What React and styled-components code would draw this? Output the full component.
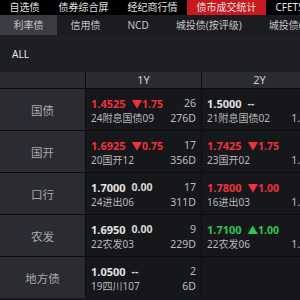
import styled, { createGlobalStyle } from "styled-components";

const GlobalStyle = createGlobalStyle`
  html, body {
    margin: 0;
    padding: 0;
    background: #16171b;
    overflow: hidden;
  }
  body {
    font-family: "Noto Sans", "Noto Sans CJK SC", sans-serif;
  }
`;

const topTabs = ["自选债", "债券综合屏", "经纪商行情", "债市成交统计", "CFETS"];
const subTabs = ["利率债", "信用债", "NCD", "城投债(按评级)", "城投债(按地区)"];

const rows = [
  {
    label: "国债",
    cells: [
      { value: "1.4525", change: "▼1.75", tone: "down", count: "26", name: "24附息国债09", term: "276D" },
      { value: "1.5000", change: "--", tone: "flat", count: "", name: "21附息国债02", term: "1.6Y" },
    ],
  },
  {
    label: "国开",
    cells: [
      { value: "1.6925", change: "▼0.75", tone: "down", count: "17", name: "20国开12", term: "356D" },
      { value: "1.7425", change: "▼1.75", tone: "down", count: "", name: "23国开02", term: "1.4Y" },
    ],
  },
  {
    label: "口行",
    cells: [
      { value: "1.7000", change: "0.00", tone: "flat", count: "17", name: "24进出06", term: "311D" },
      { value: "1.7800", change: "▼1.00", tone: "down", count: "", name: "16进出03", term: "1.5Y" },
    ],
  },
  {
    label: "农发",
    cells: [
      { value: "1.6950", change: "0.00", tone: "flat", count: "9", name: "22农发03", term: "229D" },
      { value: "1.7100", change: "▲1.00", tone: "up", count: "", name: "22农发06", term: "1.0Y" },
    ],
  },
  {
    label: "地方债",
    cells: [
      { value: "1.0500", change: "--", tone: "flat", count: "2", name: "19四川107", term: "6D" },
      null,
    ],
  },
];

const toneColor = { up: "#2fc453", down: "#f0303c", flat: "#e4e4e4" };

export default function App() {
  return (
    <Page>
      <GlobalStyle />
      <TopBar>
        {topTabs.map((t, i) => (
          <TopTab key={t} $active={i === 3}>
            {t}
          </TopTab>
        ))}
      </TopBar>
      <SubBar>
        {subTabs.map((t, i) => (
          <SubTab key={t} $active={i === 0}>
            {t}
          </SubTab>
        ))}
      </SubBar>
      <FilterBar>ALL</FilterBar>
      <Grid>
        <HeaderCell />
        <HeaderCell>1Y</HeaderCell>
        <HeaderCell>2Y</HeaderCell>
        {rows.map((r) => [
          <LabelCell key={r.label}>{r.label}</LabelCell>,
          ...r.cells.map((c, i) =>
            c ? (
              <DataCell key={r.label + i}>
                <Line>
                  <Value $tone={c.tone}>{c.value}</Value>
                  <Change $tone={c.tone}>{c.change}</Change>
                  <Side>{c.count}</Side>
                </Line>
                <Line>
                  <Name>{c.name}</Name>
                  <Side>{c.term}</Side>
                </Line>
              </DataCell>
            ) : (
              <DataCell key={r.label + i} />
            )
          ),
        ])}
      </Grid>
    </Page>
  );
}

const Page = styled.div`
  width: 300px;
  height: 300px;
  overflow: hidden;
  background: #16171b;
`;

const TopBar = styled.div`
  display: flex;
  height: 15px;
  background: #000;
  white-space: nowrap;
`;

const TopTab = styled.div`
  flex: none;
  padding: 0 9.5px;
  font-size: 10px;
  line-height: 15px;
  color: #e2e2e2;
  background: ${(p) => (p.$active ? "#c8191f" : "transparent")};
`;

const SubBar = styled.div`
  display: flex;
  height: 20px;
  background: #1b1c20;
  white-space: nowrap;
`;

const SubTab = styled.div`
  flex: none;
  padding: 0 13.5px;
  font-size: 10px;
  line-height: 20px;
  color: #c4c4c4;
  background: ${(p) => (p.$active ? "#3b3c43" : "transparent")};
`;

const FilterBar = styled.div`
  display: flex;
  align-items: center;
  height: 37px;
  padding-left: 12px;
  font-size: 10px;
  color: #e6e6e6;
  background: #1e1f23;
`;

const Grid = styled.div`
  display: grid;
  grid-template-columns: 85px 115px 115px;
  grid-template-rows: 16px;
  grid-auto-rows: 41px;
  gap: 1px;
  width: max-content;
  background: #0c0d10;
`;

const HeaderCell = styled.div`
  background: #2a2b30;
  color: #cfcfcf;
  font-size: 11px;
  line-height: 16px;
  text-align: center;
`;

const LabelCell = styled.div`
  display: flex;
  align-items: center;
  justify-content: center;
  background: #2b2c31;
  color: #a9a9a9;
  font-size: 11.5px;
`;

const DataCell = styled.div`
  background: #16171b;
  padding: 7px 5px 0;
`;

const Line = styled.div`
  display: flex;
  align-items: center;
  height: 14.5px;
  white-space: nowrap;
`;

const Value = styled.span`
  font-size: 11px;
  font-weight: 700;
  color: ${(p) => toneColor[p.$tone]};
`;

const Change = styled.span`
  margin-left: 6px;
  font-size: 10.5px;
  font-weight: 700;
  color: ${(p) => (p.$tone === "flat" ? "#d8d8d8" : toneColor[p.$tone])};
`;

const Name = styled.span`
  font-size: 10px;
  color: #b9b9b9;
`;

const Side = styled.span`
  margin-left: auto;
  font-size: 10.5px;
  color: #bdbdbd;
`;
